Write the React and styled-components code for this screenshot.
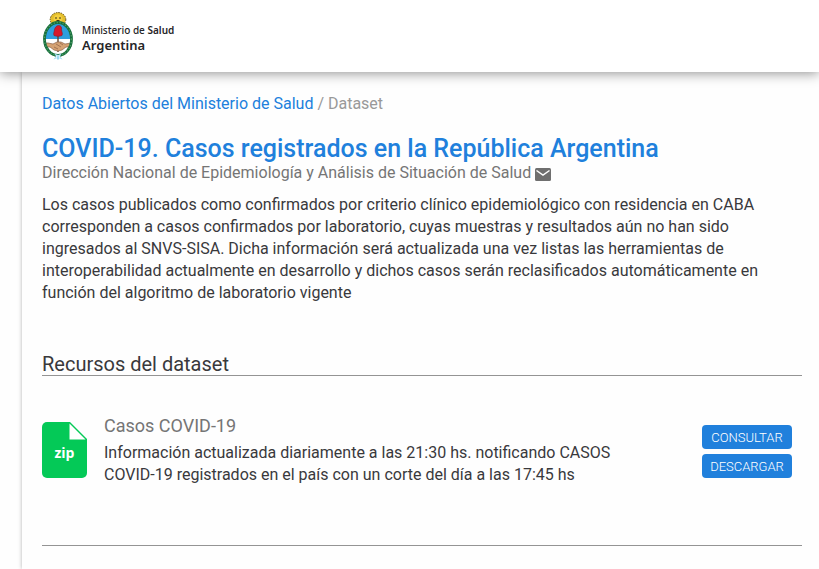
import React from "react";
import styled, { createGlobalStyle } from "styled-components";

const GlobalStyle = createGlobalStyle`
  *, *::before, *::after { box-sizing: border-box; }
  body {
    margin: 0;
    background: #fefefe;
    color: #39393c;
    font-family: Roboto, "Liberation Sans", sans-serif;
    font-size: 16px;
    line-height: 22px;
  }
  h1, h2, h3, p { margin: 0; }
  a { color: #2080dc; text-decoration: none; }
`;

const Page = styled.div`
  display: flex;
  flex-direction: column;
  min-height: 100vh;
`;

const Header = styled.header`
  position: relative;
  z-index: 1;
  padding: 11px 42px;
  background: #fff;
  box-shadow: 0 1px 12px rgba(0, 0, 0, 0.45);
`;

const Brand = styled.a`
  display: inline-flex;
  align-items: center;
  gap: 8px;
  height: 50px;
  vertical-align: top;
  color: #252528;
`;

const Emblem = styled.svg`
  width: 32px;
  height: 50px;
`;

const BrandText = styled.span`
  display: flex;
  flex-direction: column;
  padding-top: 4px;
  font-family: "Noto Sans", sans-serif;
`;

const Ministry = styled.span`
  font-size: 10px;
  line-height: 14px;
  font-weight: 500;

  strong { font-weight: 600; }
`;

const Country = styled.span`
  font-size: 13px;
  line-height: 16px;
  font-weight: 600;
`;

const Panel = styled.main`
  flex: 1;
  margin-left: 22px;
  padding: 21px 17px 23px 20px;
  background: #fefefe;
  box-shadow: 0 0 4px rgba(0, 0, 0, 0.3);
`;

const Breadcrumb = styled.nav`
  color: #999;
`;

const Title = styled.h1`
  margin-top: 18px;
  font-size: 25px;
  line-height: 31px;
  font-weight: 500;
`;

const Organization = styled.p`
  display: flex;
  align-items: center;
  gap: 4px;
  line-height: 18px;
  color: #757575;
`;

const MailLink = styled.a`
  display: flex;
  padding-top: 2px;
  color: #6f6f6f;
`;

const Description = styled.p`
  max-width: 740px;
  margin-top: 12px;
`;

const SectionTitle = styled.h2`
  margin-top: 50px;
  border-bottom: 1px solid #949494;
  font-size: 20px;
  line-height: 21px;
  font-weight: 400;
`;

const Resource = styled.article`
  display: flex;
  align-items: flex-start;
  padding: 38px 10px 59px 0;
  border-bottom: 1px solid #949494;
`;

const FileIcon = styled.svg`
  flex: none;
  width: 45px;
  height: 56px;
  margin: 8px 17px 0 0;
`;

const ResourceBody = styled.div`
  flex: 1;
  max-width: 540px;
`;

const ResourceTitle = styled.h3`
  margin-bottom: 4px;
  font-size: 18px;
  line-height: 24px;
  font-weight: 400;
  color: #757575;
`;

const Actions = styled.div`
  display: flex;
  flex: none;
  flex-direction: column;
  gap: 5px;
  width: 90px;
  margin: 11px 0 0 auto;
`;

const ActionButton = styled.button`
  height: 24px;
  padding: 2px 0 0;
  border: 0;
  border-radius: 4px;
  background: #2080dc;
  color: #fff;
  font-family: inherit;
  font-size: 13px;
  font-weight: 300;
  line-height: 22px;
  text-transform: uppercase;
  cursor: pointer;
`;

function NationalEmblem() {
  return (
    <Emblem viewBox="0 0 32 50" aria-hidden="true">
      <ellipse cx="16" cy="8.5" rx="7.8" ry="7" fill="#e2bd2c" stroke="#66501a" strokeDasharray="1.5 1" />
      <ellipse cx="16" cy="8" rx="4.500" ry="4.500" fill="#f3cf3e" />
      <path d="M13 7h2M17 7h2M14.500 9.500h3" stroke="#3f3418" strokeWidth="1" />
      <ellipse cx="16" cy="28" rx="13.500" ry="16.500" fill="#fff" />
      <path d="M3 28C3 18 9 11.500 16 11.500S29 18 29 28Z" fill="#2d9fdf" />
      <path d="M16 22v19" stroke="#60442e" strokeWidth="1.400" />
      <path d="M12 24.500c-1-2 .5-4 .5-6 .5-2 2-4 4-4 2.500 0 3.500 2 3 4 0 2 1.500 4 .5 6-2 1-6 1-8 0Z" fill="#d7192b" stroke="#8b1726" strokeWidth=".6" />
      <path d="M3 32h3l5 1 4-2 4 0 4 2 6-1v4h-5l-4 3-4 1-4-1-4-3H3Z" fill="#d5a273" stroke="#8c6247" strokeWidth=".7" />
      <path d="M14 33l5 3M12 36l4 2M18 32l3 2" stroke="#8c6247" strokeWidth=".7" />
      <ellipse cx="16" cy="28" rx="13.500" ry="16.500" fill="none" stroke="#176f3d" strokeWidth="2.800" />
      <ellipse cx="16" cy="28" rx="13.500" ry="16.500" fill="none" stroke="#4b9b60" strokeWidth="1.400" strokeDasharray="1.300 1.700" />
      <path d="M12.500 42.500l3.500 1.500 3.500-1.500-1.500 3 2.500 3-3-1-1.500 1.500-1.500-1.500-3 1 2.500-3Z" fill="#9bd9f3" />
      <path d="M15 44l-1 4M17 44l1 4" stroke="#fff" strokeWidth=".7" />
    </Emblem>
  );
}

function ZipIcon() {
  return (
    <FileIcon viewBox="0 0 45 56" role="img" aria-label="zip">
      <path d="M5 0h23l17 17v34a5 5 0 0 1-5 5H5a5 5 0 0 1-5-5V5a5 5 0 0 1 5-5Z" fill="#04c957" />
      <path d="M27.500 1.500V17.500H43.500Z" fill="#fff" />
      <text x="22.500" y="36" textAnchor="middle" fill="#fff" fontFamily="Open Sans, sans-serif" fontSize="14" fontWeight="700">zip</text>
    </FileIcon>
  );
}

export default function App() {
  return (
    <>
      <GlobalStyle />
      <Page>
        <Header>
          <Brand href="#inicio">
            <NationalEmblem />
            <BrandText>
              <Ministry>Ministerio de <strong>Salud</strong></Ministry>
              <Country>Argentina</Country>
            </BrandText>
          </Brand>
        </Header>
        <Panel>
          <Breadcrumb aria-label="Ruta">
            <a href="#datos">Datos Abiertos del Ministerio de Salud</a> / Dataset
          </Breadcrumb>
          <Title><a href="#dataset">COVID-19. Casos registrados en la República Argentina</a></Title>
          <Organization>
            Dirección Nacional de Epidemiología y Análisis de Situación de Salud
            <MailLink href="#contacto" aria-label="Enviar correo">
              <svg width="16" height="13" viewBox="0 0 16 13" aria-hidden="true">
                <rect width="16" height="13" rx="1.500" fill="currentColor" />
                <path d="M1.500 2.500L8 7l6.500-4.500" fill="none" stroke="#fff" strokeWidth="1.500" />
              </svg>
            </MailLink>
          </Organization>
          <Description>
            Los casos publicados como confirmados por criterio clínico epidemiológico con residencia en CABA
            corresponden a casos confirmados por laboratorio, cuyas muestras y resultados aún no han sido
            ingresados al SNVS-SISA. Dicha información será actualizada una vez listas las herramientas de
            interoperabilidad actualmente en desarrollo y dichos casos serán reclasificados automáticamente en
            función del algoritmo de laboratorio vigente
          </Description>
          <SectionTitle>Recursos del dataset</SectionTitle>
          <Resource>
            <ZipIcon />
            <ResourceBody>
              <ResourceTitle>Casos COVID-19</ResourceTitle>
              <p>
                Información actualizada diariamente a las 21:30 hs. notificando CASOS COVID-19 registrados en el
                país con un corte del día a las 17:45 hs
              </p>
            </ResourceBody>
            <Actions>
              <ActionButton type="button">Consultar</ActionButton>
              <ActionButton type="button">Descargar</ActionButton>
            </Actions>
          </Resource>
        </Panel>
      </Page>
    </>
  );
}
